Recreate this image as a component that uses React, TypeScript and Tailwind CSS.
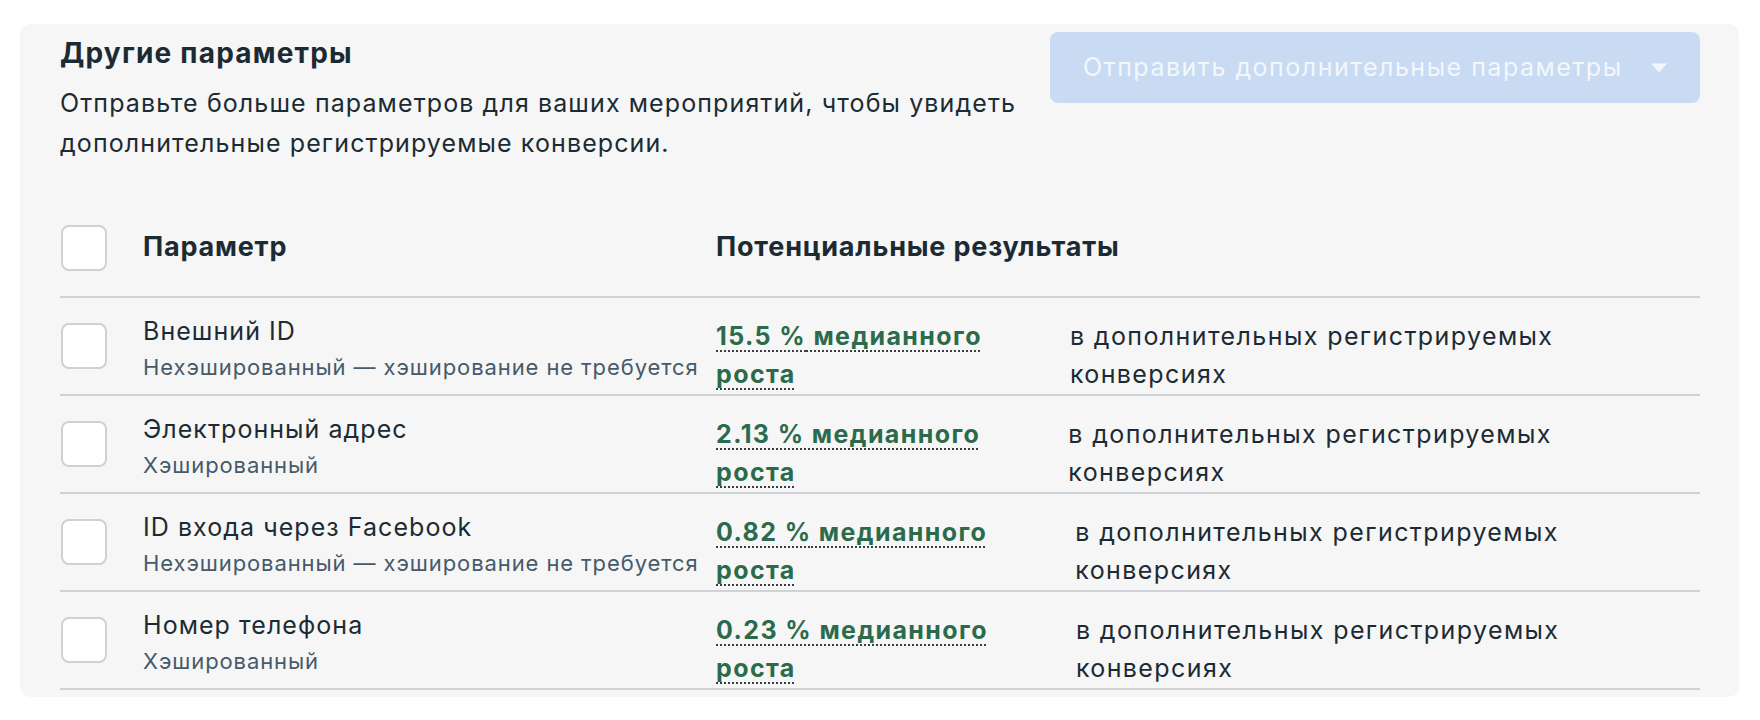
import React from "react";

type Row = {
  name: string;
  hint: string;
  value: string;
};

const rows: Row[] = [
  {
    name: "Внешний ID",
    hint: "Нехэшированный — хэширование не требуется",
    value: "15.5 %",
  },
  { name: "Электронный адрес", hint: "Хэшированный", value: "2.13 %" },
  {
    name: "ID входа через Facebook",
    hint: "Нехэшированный — хэширование не требуется",
    value: "0.82 %",
  },
  { name: "Номер телефона", hint: "Хэшированный", value: "0.23 %" },
];

function Checkbox() {
  return (
    <span className="block h-[46px] w-[46px] shrink-0 rounded-[8px] border-2 border-[#cdd2d8] bg-white" />
  );
}

export default function App() {
  return (
    <div
      className="min-h-screen bg-white px-[20px] pt-[24px] text-[#1c2b33]"
      style={{ fontFamily: "Inter, 'Noto Sans', sans-serif" }}
    >
      <div className="w-[1719px] rounded-[10px] bg-[#f6f6f6] pb-[7px] pl-[40px] pr-[39px] pt-[8px]">
        <header className="flex items-start justify-between">
          <div>
            <h2 className="mt-[3px] text-[28px] font-bold leading-[36px] tracking-[1.2px]">
              Другие параметры
            </h2>
            <p className="mt-[12px] w-[980px] text-[25px] leading-[40px] tracking-[1.1px]">
              Отправьте больше параметров для ваших мероприятий, чтобы увидеть
              дополнительные регистрируемые конверсии.
            </p>
          </div>
          <button className="flex h-[71px] w-[650px] items-center rounded-[8px] bg-[#c9dbf2] pl-[33px] pr-[32px] text-[25px] tracking-[1.5px] text-[#f3f7fd]">
            <span>Отправить дополнительные параметры</span>
            <svg
              className="ml-auto"
              width="18"
              height="10"
              viewBox="0 0 18 10"
              aria-hidden="true"
            >
              <path d="M1 0.5h16L9 9.5z" fill="#f3f7fd" />
            </svg>
          </button>
        </header>

        <div className="mt-[36px] flex h-[99px] items-center border-b-2 border-[#cfd2d6] pl-[1px]">
          <Checkbox />
          <span className="ml-[36px] w-[573px] text-[27px] font-bold tracking-[0.8px]">
            Параметр
          </span>
          <span className="text-[27px] font-bold tracking-[0.8px]">
            Потенциальные результаты
          </span>
        </div>

        {rows.map((r) => (
          <div
            key={r.name}
            className="flex h-[98px] items-start border-b-2 border-[#cfd2d6] pl-[1px]"
          >
            <div className="pt-[25px]">
              <Checkbox />
            </div>
            <div className="ml-[36px] w-[573px] pt-[17px]">
              <p className="text-[25px] leading-[32px] tracking-[1.05px]">
                {r.name}
              </p>
              <p className="mt-[5px] text-[22px] leading-[30px] tracking-[0.9px] text-[#465a69]">
                {r.hint}
              </p>
            </div>
            <p className="pt-[19px] text-[25px] font-bold leading-[38px] tracking-[1.4px] text-[#2b6b4c]">
              <span className="underline decoration-[#3a3f44] decoration-dotted decoration-2 underline-offset-[5px]">
                {r.value} медианного
              </span>
              <br />
              <span className="underline decoration-[#3a3f44] decoration-dotted decoration-2 underline-offset-[5px]">
                роста
              </span>
            </p>
            <p className="ml-[88px] pt-[19px] text-[25px] leading-[38px] tracking-[1.4px]">
              в дополнительных регистрируемых
              <br />
              конверсиях
            </p>
          </div>
        ))}
      </div>
    </div>
  );
}
